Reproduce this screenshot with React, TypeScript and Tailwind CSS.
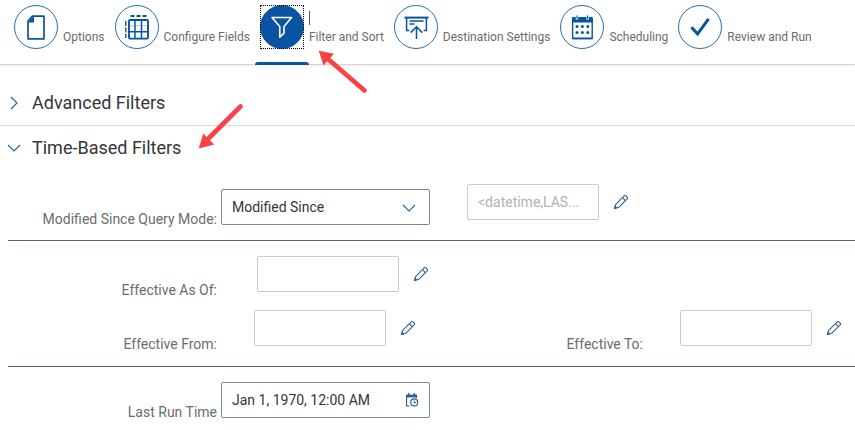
import React, { useState } from 'react';

interface IconProps {
  className?: string;
}

const DocumentIcon = () => (
  <svg className="h-7 w-7" viewBox="0 0 28 28" aria-hidden="true">
    <path d="M10.5 3.2H22v22.6H6V8z" fill="none" stroke="currentColor" strokeWidth="1.7" strokeLinejoin="round" />
    <path d="M5.5 9.5 12 2.8v6.7z" fill="currentColor" />
  </svg>
);

const FieldsIcon = () => (
  <svg className="h-7 w-7" viewBox="0 0 28 28" aria-hidden="true" fill="none" stroke="currentColor">
    <path d="M7.5 3h4M13.5 3h4M19.5 3h4" strokeWidth="1.8" />
    <path d="M2.8 8v5M2.8 14.5v5M2.8 21v4" strokeWidth="1.4" />
    <rect x="6" y="7" width="19" height="18.6" rx="1" strokeWidth="1.9" />
    <path d="M12 7v18.6M18.5 7v18.6M6 18.8h19" strokeWidth="1.5" />
    <path d="M6 12.8h19" strokeWidth="0.8" opacity="0.4" />
  </svg>
);

const FilterIcon = () => (
  <svg className="h-7 w-7" viewBox="0 0 28 28" aria-hidden="true">
    <path
      d="M4 4.5h19.6L16 13.6v6.6l-4.2 4V13.6z"
      fill="none"
      stroke="currentColor"
      strokeWidth="1.6"
      strokeLinejoin="round"
    />
  </svg>
);

const DestinationIcon = () => (
  <svg className="h-7 w-7" viewBox="0 0 28 28" aria-hidden="true" fill="none" stroke="currentColor" strokeWidth="1.5">
    <path d="M2.5 4.6h24" strokeWidth="2" />
    <path d="M4.6 5v12.6h2.8M24.4 5v12.6h-2.8" />
    <path d="M7.5 8h14M7.5 11h5" strokeWidth="1.6" />
    <path d="M14.5 26V13.8M8.6 19.6l5.9-5.9 5.9 5.9" />
  </svg>
);

const CalendarIcon = () => (
  <svg className="h-7 w-7" viewBox="0 0 28 28" aria-hidden="true">
    <rect x="4.6" y="4.8" width="19.6" height="20.8" rx="1" fill="none" stroke="currentColor" strokeWidth="1.4" />
    <path d="M4 4.4h20.8V9.6H4zM4 24.4h20.8v1.8H4z" fill="currentColor" />
    <path d="M9 2.6v4M19.6 2.6v4" stroke="white" strokeWidth="2.4" />
    <path d="M9 2.6v3.2M19.6 2.6v3.2" stroke="currentColor" strokeWidth="1.2" />
    <g fill="currentColor">
      <circle cx="9" cy="13.6" r="1.5" />
      <circle cx="14.4" cy="13.6" r="1.5" />
      <circle cx="19.8" cy="13.6" r="1.5" />
      <circle cx="9" cy="19.6" r="1.5" />
      <circle cx="14.4" cy="19.6" r="1.5" />
      <circle cx="19.8" cy="19.6" r="1.5" />
    </g>
  </svg>
);

const CheckIcon = () => (
  <svg className="h-7 w-7" viewBox="0 0 28 28" aria-hidden="true">
    <path d="M5.4 14.2l6.2 6.6L22.6 5.8" fill="none" stroke="currentColor" strokeWidth="3" />
  </svg>
);

const PencilIcon = () => (
  <svg className="h-4 w-4" viewBox="0 0 16 16" aria-hidden="true" fill="none" stroke="currentColor" strokeLinejoin="round">
    <path d="M1.5 14.5l1.2-4.2L11.4 1.6q.6-.5 1.2 0l1.8 1.8q.5.6 0 1.2L5.7 13.3z" strokeWidth="1.1" />
    <path d="M9.4 3.6l3 3" strokeWidth="1.1" />
    <path d="M1.2 14.8l.8-3 2.2 2.2z" fill="currentColor" strokeWidth="0.5" />
  </svg>
);

const ChevronIcon = ({ className }: IconProps) => (
  <svg className={className} viewBox="0 0 14 14" aria-hidden="true">
    <path d="M1 4l6 6 6-6" fill="none" stroke="currentColor" strokeWidth="1.1" />
  </svg>
);

const DateTimeIcon = () => (
  <svg className="h-4 w-4" viewBox="0 0 16 16" aria-hidden="true" fill="none" stroke="currentColor">
    <path d="M5.5 14H2.6V3.5h9.8V6" strokeWidth="1.1" />
    <path d="M2 2.6h11v2.8H2z" fill="currentColor" stroke="none" />
    <path d="M4.6 1v2M10.4 1v2" strokeWidth="1.4" />
    <circle cx="10.2" cy="10.4" r="3.5" strokeWidth="1.1" />
    <path d="M10.2 8.6v2h1.8" strokeWidth="1" />
  </svg>
);

const steps = [
  { id: 'options', label: 'Options', icon: <DocumentIcon /> },
  { id: 'fields', label: 'Configure Fields', icon: <FieldsIcon /> },
  { id: 'filter', label: 'Filter and Sort', icon: <FilterIcon /> },
  { id: 'destination', label: 'Destination Settings', icon: <DestinationIcon /> },
  { id: 'scheduling', label: 'Scheduling', icon: <CalendarIcon /> },
  { id: 'review', label: 'Review and Run', icon: <CheckIcon /> },
];

const StepBar = () => {
  const [active, setActive] = useState('filter');

  return (
    <nav
      className="flex gap-[10px] border-b border-[#d5d5d5] pl-[14px] pt-[5px] shadow-[0_1px_2px_rgba(0,0,0,0.08)]"
      aria-label="Steps"
    >
      {steps.map((step) => {
        const selected = step.id === active;
        return (
          <button
            key={step.id}
            type="button"
            onClick={() => setActive(step.id)}
            aria-current={selected ? 'step' : undefined}
            className="relative flex h-[59px] items-start gap-[5px] whitespace-nowrap text-xs text-[#6a6d70]"
          >
            <span className={selected ? 'outline-1 -outline-offset-1 outline-dotted outline-black' : ''}>
              <span
                className={`flex h-11 w-11 items-center justify-center rounded-full border ${
                  selected ? 'border-[#0854a0] bg-[#0854a0] text-white' : 'border-[#2a6cb5] bg-white text-[#0854a0]'
                }`}
              >
                {step.icon}
              </span>
            </span>
            <span className="pt-6">{step.label}</span>
            {selected && (
              <>
                <span className="absolute left-[49px] top-[6px] h-[14px] w-px bg-[#555]" />
                <span className="absolute -bottom-px -left-[5px] h-[3px] w-[54px] rounded-t-sm bg-[#0854a0]" />
              </>
            )}
          </button>
        );
      })}
    </nav>
  );
};

interface FieldProps {
  id: string;
  label: string;
  wide?: boolean;
}

const EditButton = ({ label }: { label: string }) => (
  <button type="button" aria-label={label} className="ml-[14px] mt-[10px] h-4 w-4 shrink-0 text-[#346187]">
    <PencilIcon />
  </button>
);

const EditableField = ({ id, label, wide }: FieldProps) => (
  <div className="flex items-start">
    <label htmlFor={id} className="w-[217px] shrink-0 pt-6 text-right text-[#6a6d70]">
      {label}
    </label>
    <input
      id={id}
      type="text"
      readOnly
      className={`h-9 rounded-xs border border-[#c9cccf] bg-white px-[10px] ${
        wide ? 'ml-10 w-[142px]' : 'ml-[37px] w-[132px]'
      }`}
    />
    <EditButton label={`Edit ${label}`} />
  </div>
);

const TimeBasedFilters = () => {
  const [mode, setMode] = useState('Modified Since');
  const [lastRun, setLastRun] = useState('Jan 1, 1970, 12:00 AM');

  return (
    <div className="text-sm leading-5">
      <div className="ml-2 flex items-start border-b border-[#5b6475] pb-[11px] pt-[14px]">
        <div className="flex items-start pt-[5px]">
          <label htmlFor="mode" className="w-[209px] shrink-0 pt-5 text-right text-[#6a6d70]">
            Modified Since Query Mode:
          </label>
          <div className="relative ml-1">
            <select
              id="mode"
              value={mode}
              onChange={(e) => setMode(e.target.value)}
              className="block h-9 w-[209px] appearance-none rounded-xs border border-[#7f8896] bg-white px-[10px] text-[#32363a]"
            >
              <option>Modified Since</option>
            </select>
            <ChevronIcon className="pointer-events-none absolute right-[14px] top-3 h-[14px] w-[14px] text-[#1f5f9f]" />
          </div>
        </div>
        <input
          type="text"
          readOnly
          aria-label="Modified since value"
          value="<datetime,LAS..."
          className="ml-[37px] h-9 w-[132px] rounded-xs border border-[#c9cccf] bg-white px-[10px] text-[#b0b2b4]"
        />
        <EditButton label="Edit modified since value" />
      </div>

      <div className="ml-2 border-b border-[#5b6475] pb-3 pt-[15px]">
        <div className="-ml-2 grid grid-cols-2 gap-y-[10px] pr-[3px]">
          <div className="col-span-2">
            <EditableField id="as-of" label="Effective As Of:" wide />
          </div>
          <EditableField id="from" label="Effective From:" />
          <EditableField id="to" label="Effective To:" />
        </div>
      </div>

      <div className="flex items-start pb-2 pt-[15px]">
        <label htmlFor="last-run" className="w-[217px] shrink-0 pt-5 text-right text-[#6a6d70]">
          Last Run Time
        </label>
        <div className="relative ml-1">
          <input
            id="last-run"
            type="text"
            value={lastRun}
            onChange={(e) => setLastRun(e.target.value)}
            className="block h-9 w-[209px] rounded-xs border border-[#7f8896] bg-white pl-[10px] pr-9 text-[#32363a]"
          />
          <button type="button" aria-label="Open picker" className="absolute right-[10px] top-[10px] text-[#1f5f9f]">
            <DateTimeIcon />
          </button>
        </div>
      </div>
    </div>
  );
};

const App: React.FC = () => {
  const [advancedOpen, setAdvancedOpen] = useState(false);
  const [timeOpen, setTimeOpen] = useState(true);

  return (
    <div className="relative bg-white font-['Roboto','Noto_Sans',sans-serif]">
      <StepBar />
      <section className="border-b border-[#d9d9d9]">
        <h2>
          <button
            type="button"
            onClick={() => setAdvancedOpen(!advancedOpen)}
            aria-expanded={advancedOpen}
            className="flex w-full items-center gap-[11px] pb-[10px] pl-[7px] pt-[26px] text-lg leading-6 text-[#32363a]"
          >
            <ChevronIcon className={`h-[14px] w-[14px] text-[#1f5f9f] ${advancedOpen ? '' : '-rotate-90'}`} />
            Advanced Filters
          </button>
        </h2>
      </section>
      <section>
        <h2>
          <button
            type="button"
            onClick={() => setTimeOpen(!timeOpen)}
            aria-expanded={timeOpen}
            className="flex w-full items-center gap-[11px] py-[10px] pl-[7px] text-lg leading-6 text-[#32363a]"
          >
            <ChevronIcon className={`h-[14px] w-[14px] text-[#1f5f9f] ${timeOpen ? '' : '-rotate-90'}`} />
            Time-Based Filters
          </button>
        </h2>
        {timeOpen && <TimeBasedFilters />}
      </section>

      {/* callout arrows */}
      <svg className="pointer-events-none absolute left-[318px] top-[50px] h-[44px] w-[50px]" viewBox="0 0 50 44" aria-hidden="true">
        <path d="M46.5 40.5L10 9" stroke="#fb4144" strokeWidth="4.6" strokeLinecap="round" />
        <path d="M.7.7l15.2 3.1L5.6 15.6z" fill="#fb4144" />
      </svg>
      <svg className="pointer-events-none absolute left-[197px] top-[102px] h-[48px] w-[48px]" viewBox="0 0 48 48" aria-hidden="true">
        <path d="M43.5 4.5L11 37" stroke="#fb4144" strokeWidth="4.6" strokeLinecap="round" />
        <path d="M1.8 46.4l4.4-15 11 11z" fill="#fb4144" />
      </svg>
    </div>
  );
};

export default App;
